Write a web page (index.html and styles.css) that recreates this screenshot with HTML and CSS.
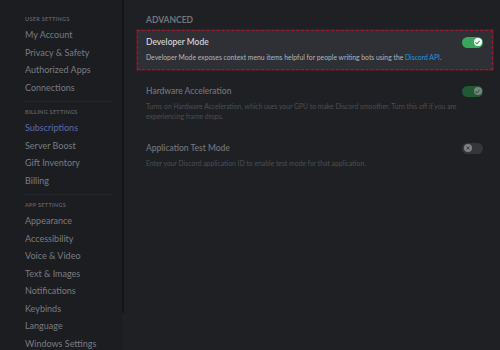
FILE: index.html
```html
<html>
<head>
    <meta charset="UTF-8">
    <title>Settings - Advanced</title>
    <link rel="stylesheet" href="styles.css">
</head>
<body>
    <div class="app">
        <nav class="sidebar">
            <div class="nav-group">
                <div class="nav-header">User Settings</div>
                <div class="nav-item">My Account</div>
                <div class="nav-item">Privacy &amp; Safety</div>
                <div class="nav-item">Authorized Apps</div>
                <div class="nav-item">Connections</div>
            </div>
            <div class="nav-sep"></div>
            <div class="nav-group">
                <div class="nav-header">Billing Settings</div>
                <div class="nav-item selected">Subscriptions</div>
                <div class="nav-item">Server Boost</div>
                <div class="nav-item">Gift Inventory</div>
                <div class="nav-item">Billing</div>
            </div>
            <div class="nav-sep"></div>
            <div class="nav-group">
                <div class="nav-header">App Settings</div>
                <div class="nav-item">Appearance</div>
                <div class="nav-item">Accessibility</div>
                <div class="nav-item">Voice &amp; Video</div>
                <div class="nav-item">Text &amp; Images</div>
                <div class="nav-item">Notifications</div>
                <div class="nav-item">Keybinds</div>
                <div class="nav-item">Language</div>
                <div class="nav-item">Windows Settings</div>
            </div>
        </nav>
        <div class="scrollbar"></div>
        <main class="content">
            <h2 class="section-title">Advanced</h2>

            <div class="setting highlight">
                <div class="setting-row">
                    <span class="setting-name">Developer Mode</span>
                    <span class="toggle on">
                        <span class="knob">
                            <svg viewBox="0 0 10 10" width="7" height="7"><path d="M2.5 5.3 L4.2 7 L7.6 3" fill="none" stroke="#3ba55c" stroke-width="1.6" stroke-linecap="round"/></svg>
                        </span>
                    </span>
                </div>
                <p class="setting-desc">Developer Mode exposes context menu items helpful for people writing bots using the <a class="link">Discord API</a>.</p>
            </div>

            <div class="setting dim">
                <div class="setting-row">
                    <span class="setting-name">Hardware Acceleration</span>
                    <span class="toggle on">
                        <span class="knob">
                            <svg viewBox="0 0 10 10" width="7" height="7"><path d="M2.5 5.3 L4.2 7 L7.6 3" fill="none" stroke="#2a6e40" stroke-width="1.6" stroke-linecap="round"/></svg>
                        </span>
                    </span>
                </div>
                <p class="setting-desc">Turns on Hardware Acceleration, which uses your GPU to make Discord smoother. Turn this off if you are experiencing frame drops.</p>
            </div>

            <div class="setting dim">
                <div class="setting-row">
                    <span class="setting-name">Application Test Mode</span>
                    <span class="toggle off">
                        <span class="knob">
                            <svg viewBox="0 0 10 10" width="6" height="6"><path d="M3 3 L7 7 M7 3 L3 7" fill="none" stroke="#3a3c41" stroke-width="1.6" stroke-linecap="round"/></svg>
                        </span>
                    </span>
                </div>
                <p class="setting-desc">Enter your Discord application ID to enable test mode for that application.</p>
            </div>
        </main>
    </div>
</body>
</html>
```

FILE: styles.css
```css
body {
    margin: 0;
    padding: 0;
    font-family: Lato, 'Noto Sans', sans-serif;
    background-color: #1f2024;
    overflow: hidden;
}
.app {
    display: flex;
    width: 500px;
    height: 350px;
}
.sidebar {
    width: 122px;
    flex-shrink: 0;
    background-color: #1c1d21;
    padding: 14px 10px 0 25px;
    box-sizing: border-box;
}
.nav-header {
    height: 10px;
    line-height: 10px;
    margin-bottom: 2px;
    font-size: 5.5px;
    font-weight: bold;
    text-transform: uppercase;
    letter-spacing: 0.3px;
    color: #5c5e64;
}
.nav-item {
    height: 17.5px;
    line-height: 17.5px;
    font-size: 9px;
    color: #797c82;
    white-space: nowrap;
}
.nav-item.selected {
    color: #5e6aa6;
}
.nav-sep {
    height: 1px;
    background-color: #25262b;
    margin: 5px 0 5px 0;
}
.scrollbar {
    width: 2px;
    height: 313px;
    background-color: #141518;
    flex-shrink: 0;
}
.content {
    flex: 1;
    padding: 14px 7px 0 13px;
}
.section-title {
    margin: 0 0 4px 9px;
    font-size: 8.5px;
    font-weight: bold;
    text-transform: uppercase;
    color: #73767c;
    line-height: 12px;
}
.setting {
    padding: 6px 10px 7px 9px;
    margin-bottom: 8px;
}
.setting.highlight {
    background-color: #2f3035;
    border: 1px dashed #9b1c2e;
    outline: 1px solid rgba(120, 20, 35, 0.5);
    padding: 5px 9px 7px 8px;
    margin-bottom: 9px;
}
.setting-row {
    display: flex;
    justify-content: space-between;
    align-items: center;
    height: 12px;
}
.setting-name {
    font-size: 8.5px;
    font-weight: 500;
    color: #dcddde;
}
.dim .setting-name {
    color: #75787e;
}
.setting-desc {
    margin: 4px 0 0 0;
    font-size: 6.8px;
    line-height: 10px;
    color: #b3b5b9;
}
.dim .setting-desc {
    color: #4c4e53;
}
.link {
    color: #1f9ad6;
}
.toggle {
    position: relative;
    width: 21px;
    height: 11px;
    border-radius: 6px;
    display: inline-block;
}
.toggle.on {
    background-color: #3ba55c;
}
.dim .toggle.on {
    background-color: #1f5a33;
}
.toggle.off {
    background-color: #34363b;
}
.knob {
    position: absolute;
    top: 1.5px;
    width: 8px;
    height: 8px;
    border-radius: 50%;
    background-color: #ffffff;
    display: flex;
    align-items: center;
    justify-content: center;
}
.on .knob {
    right: 1.5px;
}
.off .knob {
    left: 1.5px;
}
.dim .knob {
    background-color: #7e8084;
}
```
